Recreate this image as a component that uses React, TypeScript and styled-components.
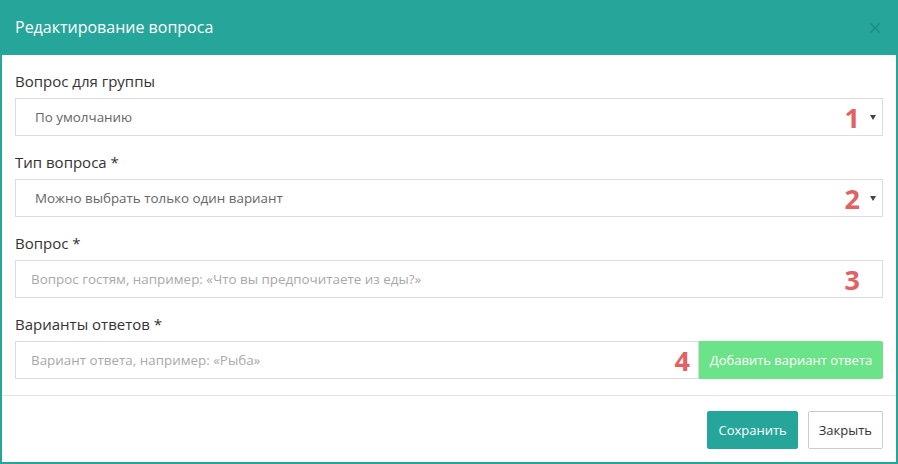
import React from "react";
import styled, { createGlobalStyle } from "styled-components";

const teal = "#26a69a";

const Global = createGlobalStyle`
  html, body { margin: 0; padding: 0; background: #ffffff; }
  body { font-family: "Open Sans", "Noto Sans", "DejaVu Sans", sans-serif; }
  * { box-sizing: border-box; }
`;

const Modal = styled.div`
  width: 898px;
  height: 464px;
  display: flex;
  flex-direction: column;
  background: #fff;
`;

const Header = styled.div`
  height: 55px;
  flex: none;
  background: ${teal};
  display: flex;
  align-items: center;
  justify-content: space-between;
  padding: 0 17px 1px 15px;
`;

const Title = styled.h4`
  margin: 0;
  font-size: 16px;
  font-weight: 400;
  color: #ffffff;
`;

const Close = styled.button`
  border: 0;
  background: transparent;
  padding: 0;
  width: 12px;
  height: 12px;
  display: flex;
  align-items: center;
  justify-content: center;
  cursor: pointer;
  margin-top: 1px;
`;

const Frame = styled.div`
  flex: 1;
  display: flex;
  flex-direction: column;
  border: solid ${teal};
  border-width: 0 2px 2px 2px;
`;

const Body = styled.div`
  padding: 16px 13px 16px 13px;
  display: flex;
  flex-direction: column;
  gap: 16px;
`;

const Group = styled.div`
  display: flex;
  flex-direction: column;
`;

const Label = styled.label`
  font-size: 15px;
  line-height: 20px;
  color: #333333;
  margin-bottom: 7px;
`;

const Field = styled.div`
  position: relative;
  display: flex;
  height: 38px;
`;

const SelectBox = styled.div`
  flex: 1;
  height: 38px;
  border: 1px solid #dcdcdc;
  display: flex;
  align-items: center;
  padding: 0 6px 0 19px;
  font-size: 13.4px;
  color: #666666;
  justify-content: space-between;
`;

const TextInput = styled.input`
  flex: 1;
  min-width: 0;
  height: 38px;
  border: 1px solid #dcdcdc;
  padding: 0 15px;
  font-family: inherit;
  font-size: 13.4px;
  color: #555;
  outline: none;
  &::placeholder { color: #a9a9a9; }
`;

const Caret = styled.span`
  width: 0;
  height: 0;
  border-left: 3px solid transparent;
  border-right: 3px solid transparent;
  border-top: 5px solid #444;
`;

const Marker = styled.span<{ $right: number }>`
  position: absolute;
  right: ${(p) => p.$right}px;
  top: 50%;
  transform: translateY(-50%);
  font-size: 27px;
  font-weight: 700;
  color: #e06262;
  line-height: 1;
  pointer-events: none;
`;

const AddButton = styled.button`
  flex: none;
  width: 184px;
  height: 38px;
  border: 0;
  border-radius: 0 2px 2px 0;
  background: #6be388;
  color: #ffffff;
  font-family: inherit;
  font-size: 13px;
  padding: 0;
`;

const Divider = styled.div`
  height: 1px;
  background: #e5e5e5;
`;

const Footer = styled.div`
  display: flex;
  justify-content: flex-end;
  gap: 10px;
  padding: 15px 13px 13px 13px;
`;

const Btn = styled.button<{ $primary?: boolean }>`
  height: 38px;
  padding: 0 10px;
  border-radius: 2px;
  font-family: inherit;
  font-size: 13px;
  border: 1px solid ${(p) => (p.$primary ? teal : "#cccccc")};
  background: ${(p) => (p.$primary ? teal : "#ffffff")};
  color: ${(p) => (p.$primary ? "#ffffff" : "#333333")};
`;

export default function App() {
  return (
    <>
      <Global />
      <Modal>
        <Header>
          <Title>Редактирование вопроса</Title>
          <Close aria-label="Закрыть">
            <svg width="10" height="10" viewBox="0 0 10 10">
              <path d="M0.5 0.5 L9.5 9.5 M9.5 0.5 L0.5 9.5" stroke="#1c8a80" strokeWidth="1.3" fill="none" />
            </svg>
          </Close>
        </Header>
        <Frame>
          <Body>
            <Group>
              <Label>Вопрос для группы</Label>
              <Field>
                <SelectBox>
                  <span>По умолчанию</span>
                  <Caret />
                </SelectBox>
                <Marker $right={23}>1</Marker>
              </Field>
            </Group>
            <Group>
              <Label>Тип вопроса *</Label>
              <Field>
                <SelectBox>
                  <span>Можно выбрать только один вариант</span>
                  <Caret />
                </SelectBox>
                <Marker $right={23}>2</Marker>
              </Field>
            </Group>
            <Group>
              <Label>Вопрос *</Label>
              <Field>
                <TextInput placeholder="Вопрос гостям, например: «Что вы предпочитаете из еды?»" />
                <Marker $right={23}>3</Marker>
              </Field>
            </Group>
            <Group>
              <Label>Варианты ответов *</Label>
              <Field>
                <TextInput placeholder="Вариант ответа, например: «Рыба»" />
                <Marker $right={193}>4</Marker>
                <AddButton>Добавить вариант ответа</AddButton>
              </Field>
            </Group>
          </Body>
          <Divider />
          <Footer>
            <Btn $primary>Сохранить</Btn>
            <Btn>Закрыть</Btn>
          </Footer>
        </Frame>
      </Modal>
    </>
  );
}
